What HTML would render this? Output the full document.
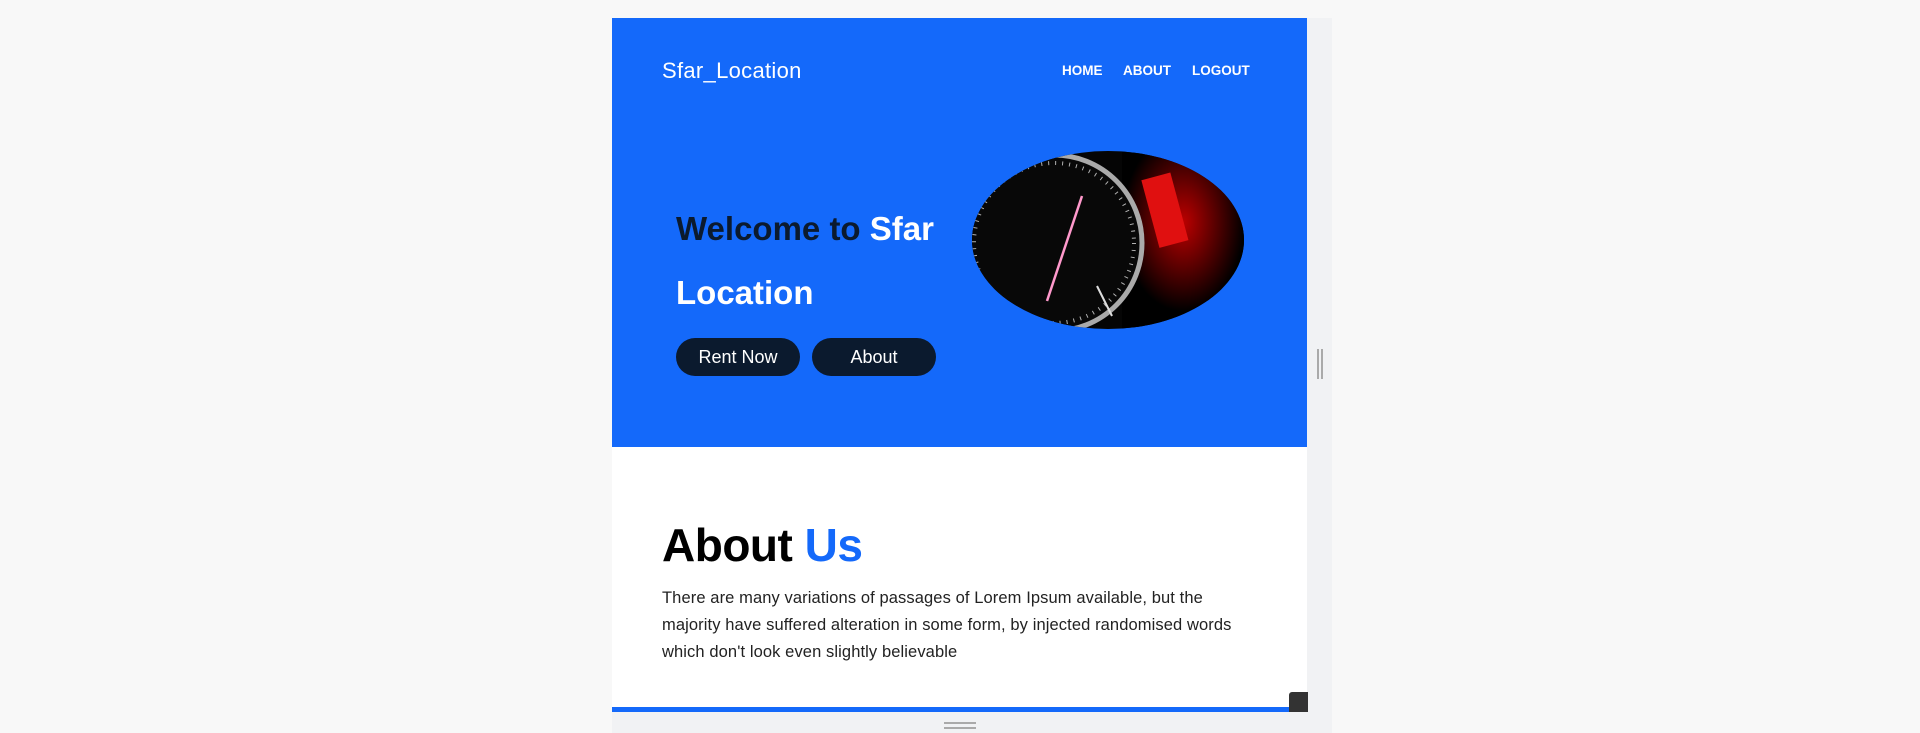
<!DOCTYPE html>
<html><head><style>
*{margin:0;padding:0;box-sizing:border-box}
body{width:1920px;height:733px;background:#f8f8f8;font-family:"Liberation Sans",sans-serif;position:relative;overflow:hidden}
.abs{position:absolute}
.hero{left:612px;top:18px;width:695px;height:429px;background:#1469fa}
.strip{left:1307px;top:18px;width:25px;height:715px;background:#f1f2f4}
.white{left:612px;top:447px;width:695px;height:260px;background:#fff}
.line{left:612px;top:707px;width:695px;height:5px;background:#1469fa}
.bot{left:612px;top:712px;width:720px;height:21px;background:#f1f2f4}
.logo{left:662px;top:58px;color:#fff;font-size:22px;letter-spacing:0.3px}
.nav{top:63px;color:#fff;font-size:13.5px;font-weight:bold}
h1{position:absolute;left:676px;font-size:33px;font-weight:900;color:#0b1a2e;letter-spacing:0}
.btn{top:338px;height:38px;width:124px;border-radius:19px;background:#0b1a2e;color:#fff;font-size:18px;text-align:center;line-height:38px}
.about{left:662px;top:518px;font-size:46px;font-weight:900;color:#000;letter-spacing:-0.5px}
.p{left:662px;top:585px;width:580px;font-size:16.5px;letter-spacing:0.1px;line-height:27px;color:#222}
</style></head><body>
<div class="abs hero"></div>
<div class="abs strip"></div>
<div class="abs white"></div>
<div class="abs line"></div>
<div class="abs bot"></div>
<div class="abs logo">Sfar_Location</div>
<div class="abs nav" style="left:1062px">HOME</div>
<div class="abs nav" style="left:1123px">ABOUT</div>
<div class="abs nav" style="left:1192px">LOGOUT</div>
<h1 style="top:210px">Welcome to <span style="color:#fff">Sfar</span></h1>
<h1 style="top:274px;color:#fff">Location</h1>
<div class="abs btn" style="left:676px">Rent Now</div>
<div class="abs btn" style="left:812px">About</div>
<svg class="abs" style="left:972px;top:151px" width="272" height="178" viewBox="0 0 272 178">
<defs><clipPath id="c"><ellipse cx="136" cy="89" rx="136" ry="89"/></clipPath>
<radialGradient id="r" cx="0.5" cy="0.4" r="0.5"><stop offset="0" stop-color="#b00"/><stop offset="1" stop-color="#000"/></radialGradient></defs>
<g clip-path="url(#c)">
<rect width="272" height="178" fill="#050505"/>
<rect x="150" width="122" height="178" fill="url(#r)"/>
<rect x="178" y="25" width="30" height="70" fill="#e01010" transform="rotate(-15 190 60)"/>
<circle cx="82" cy="92" r="88" fill="#080808" stroke="#aaa" stroke-width="5"/>
<circle cx="82" cy="92" r="80" fill="none" stroke="#ddd" stroke-width="4" stroke-dasharray="1 6" opacity="0.8"/>
<line x1="75" y1="150" x2="110" y2="45" stroke="#f9c" stroke-width="2.5"/>
<line x1="125" y1="135" x2="140" y2="165" stroke="#ddd" stroke-width="2"/>
</g></svg>
<div class="abs about">About <span style="color:#1469fa">Us</span></div>
<div class="abs p">There are many variations of passages of Lorem Ipsum available, but the majority have suffered alteration in some form, by injected randomised words which don't look even slightly believable</div>
<div class="abs" style="left:1317px;top:349px;width:2px;height:30px;background:#aaa"></div>
<div class="abs" style="left:1321px;top:349px;width:2px;height:30px;background:#aaa"></div>
<div class="abs" style="left:944px;top:722px;width:32px;height:2px;background:#aaa"></div>
<div class="abs" style="left:944px;top:727px;width:32px;height:2px;background:#aaa"></div>
<div class="abs" style="left:1289px;top:692px;width:19px;height:20px;background:#333;border-radius:3px 0 0 0"></div>
</body></html>
